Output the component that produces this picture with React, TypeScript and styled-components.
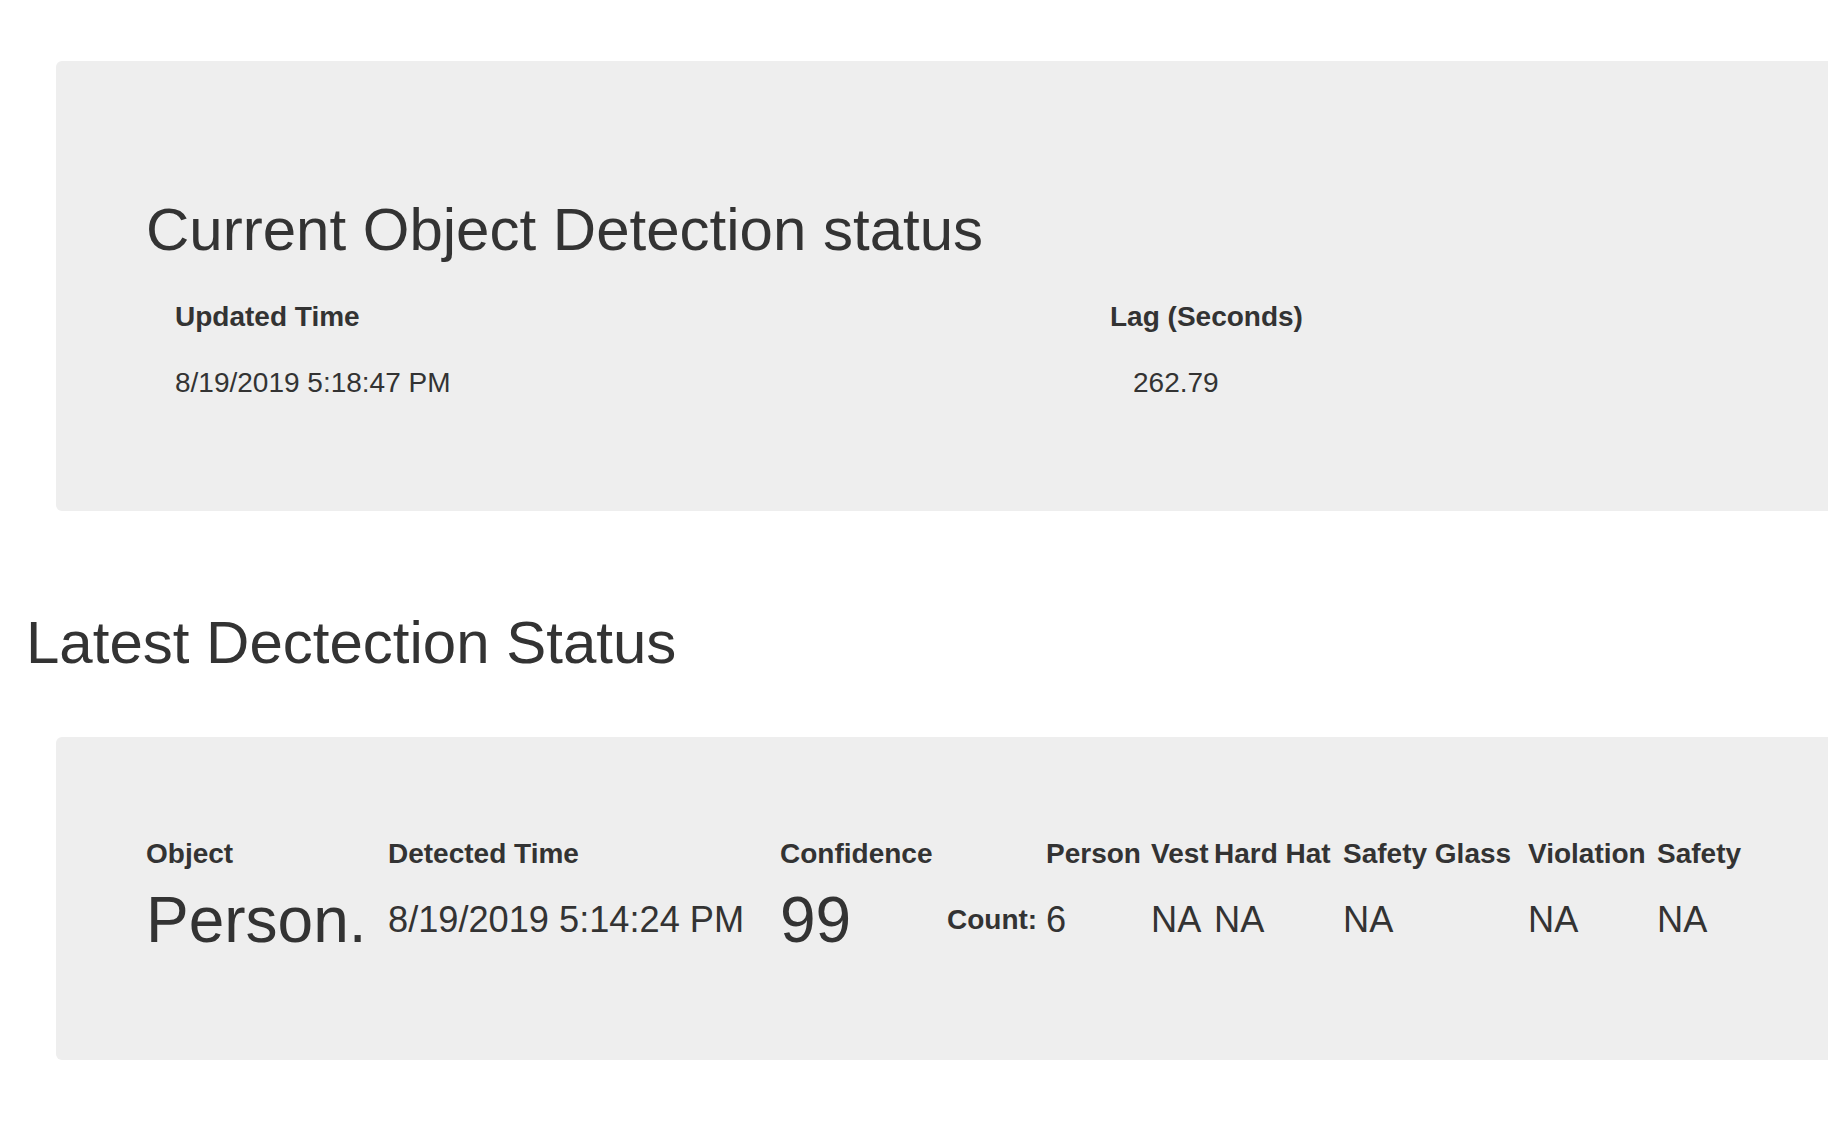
import React from "react";
import styled, { createGlobalStyle } from "styled-components";

const GlobalStyle = createGlobalStyle`
  html, body {
    margin: 0;
    padding: 0;
    background: #ffffff;
    overflow-x: hidden;
  }
  body {
    font-family: "Liberation Sans", Arial, Helvetica, sans-serif;
    color: #333333;
  }
`;

const Page = styled.main`
  width: 2200px;
  padding: 61px 0 60px 26px;
  box-sizing: border-box;
`;

const Jumbotron = styled.section<{ $top: number; $bottom: number }>`
  margin-left: 30px;
  background: #eeeeee;
  border-radius: 6px;
  padding: ${(p) => p.$top}px 0 ${(p) => p.$bottom}px 90px;
`;

const PanelTitle = styled.h1`
  margin: 0 0 38.5px;
  font-size: 60px;
  font-weight: 400;
  line-height: 1.1;
`;

const SectionTitle = styled.h1`
  margin: 99.4px 0 61px;
  font-size: 60px;
  font-weight: 400;
  line-height: 1.1;
`;

const StatusGrid = styled.div`
  display: grid;
  grid-template-columns: 935px auto;
  row-gap: 36px;
  padding-left: 29px;
`;

const Label = styled.div`
  font-size: 28px;
  font-weight: 700;
  line-height: 1.1;
  white-space: nowrap;
`;

const Value = styled.div<{ $indent?: number }>`
  font-size: 28px;
  line-height: 1.1;
  padding-left: ${(p) => p.$indent ?? 0}px;
  white-space: nowrap;
`;

const DetectionGrid = styled.div`
  display: grid;
  grid-template-columns: 242px 392px 167px 99px 105px 63px 129px 185px 129px auto;
  row-gap: 15px;
  align-items: center;
`;

const BigValue = styled.div`
  font-size: 64px;
  line-height: 1.1;
  white-space: nowrap;
`;

const MidValue = styled.div`
  font-size: 36.2px;
  line-height: 1.1;
  white-space: nowrap;
`;

const headers = [
  "Object",
  "Detected Time",
  "Confidence",
  "",
  "Person",
  "Vest",
  "Hard Hat",
  "Safety Glass",
  "Violation",
  "Safety",
];

export default function App() {
  return (
    <>
      <GlobalStyle />
      <Page>
        <Jumbotron $top={136} $bottom={111.5}>
          <PanelTitle>Current Object Detection status</PanelTitle>
          <StatusGrid>
            <Label>Updated Time</Label>
            <Label>Lag (Seconds)</Label>
            <Value>8/19/2019 5:18:47 PM</Value>
            <Value $indent={23}>262.79</Value>
          </StatusGrid>
        </Jumbotron>

        <SectionTitle>Latest Dectection Status</SectionTitle>

        <Jumbotron $top={102} $bottom={105}>
          <DetectionGrid>
            {headers.map((h, i) => (
              <Label key={i}>{h}</Label>
            ))}
            <BigValue>Person.</BigValue>
            <MidValue>8/19/2019 5:14:24 PM</MidValue>
            <BigValue>99</BigValue>
            <Label>Count:</Label>
            <MidValue>6</MidValue>
            <MidValue>NA</MidValue>
            <MidValue>NA</MidValue>
            <MidValue>NA</MidValue>
            <MidValue>NA</MidValue>
            <MidValue>NA</MidValue>
          </DetectionGrid>
        </Jumbotron>
      </Page>
    </>
  );
}
